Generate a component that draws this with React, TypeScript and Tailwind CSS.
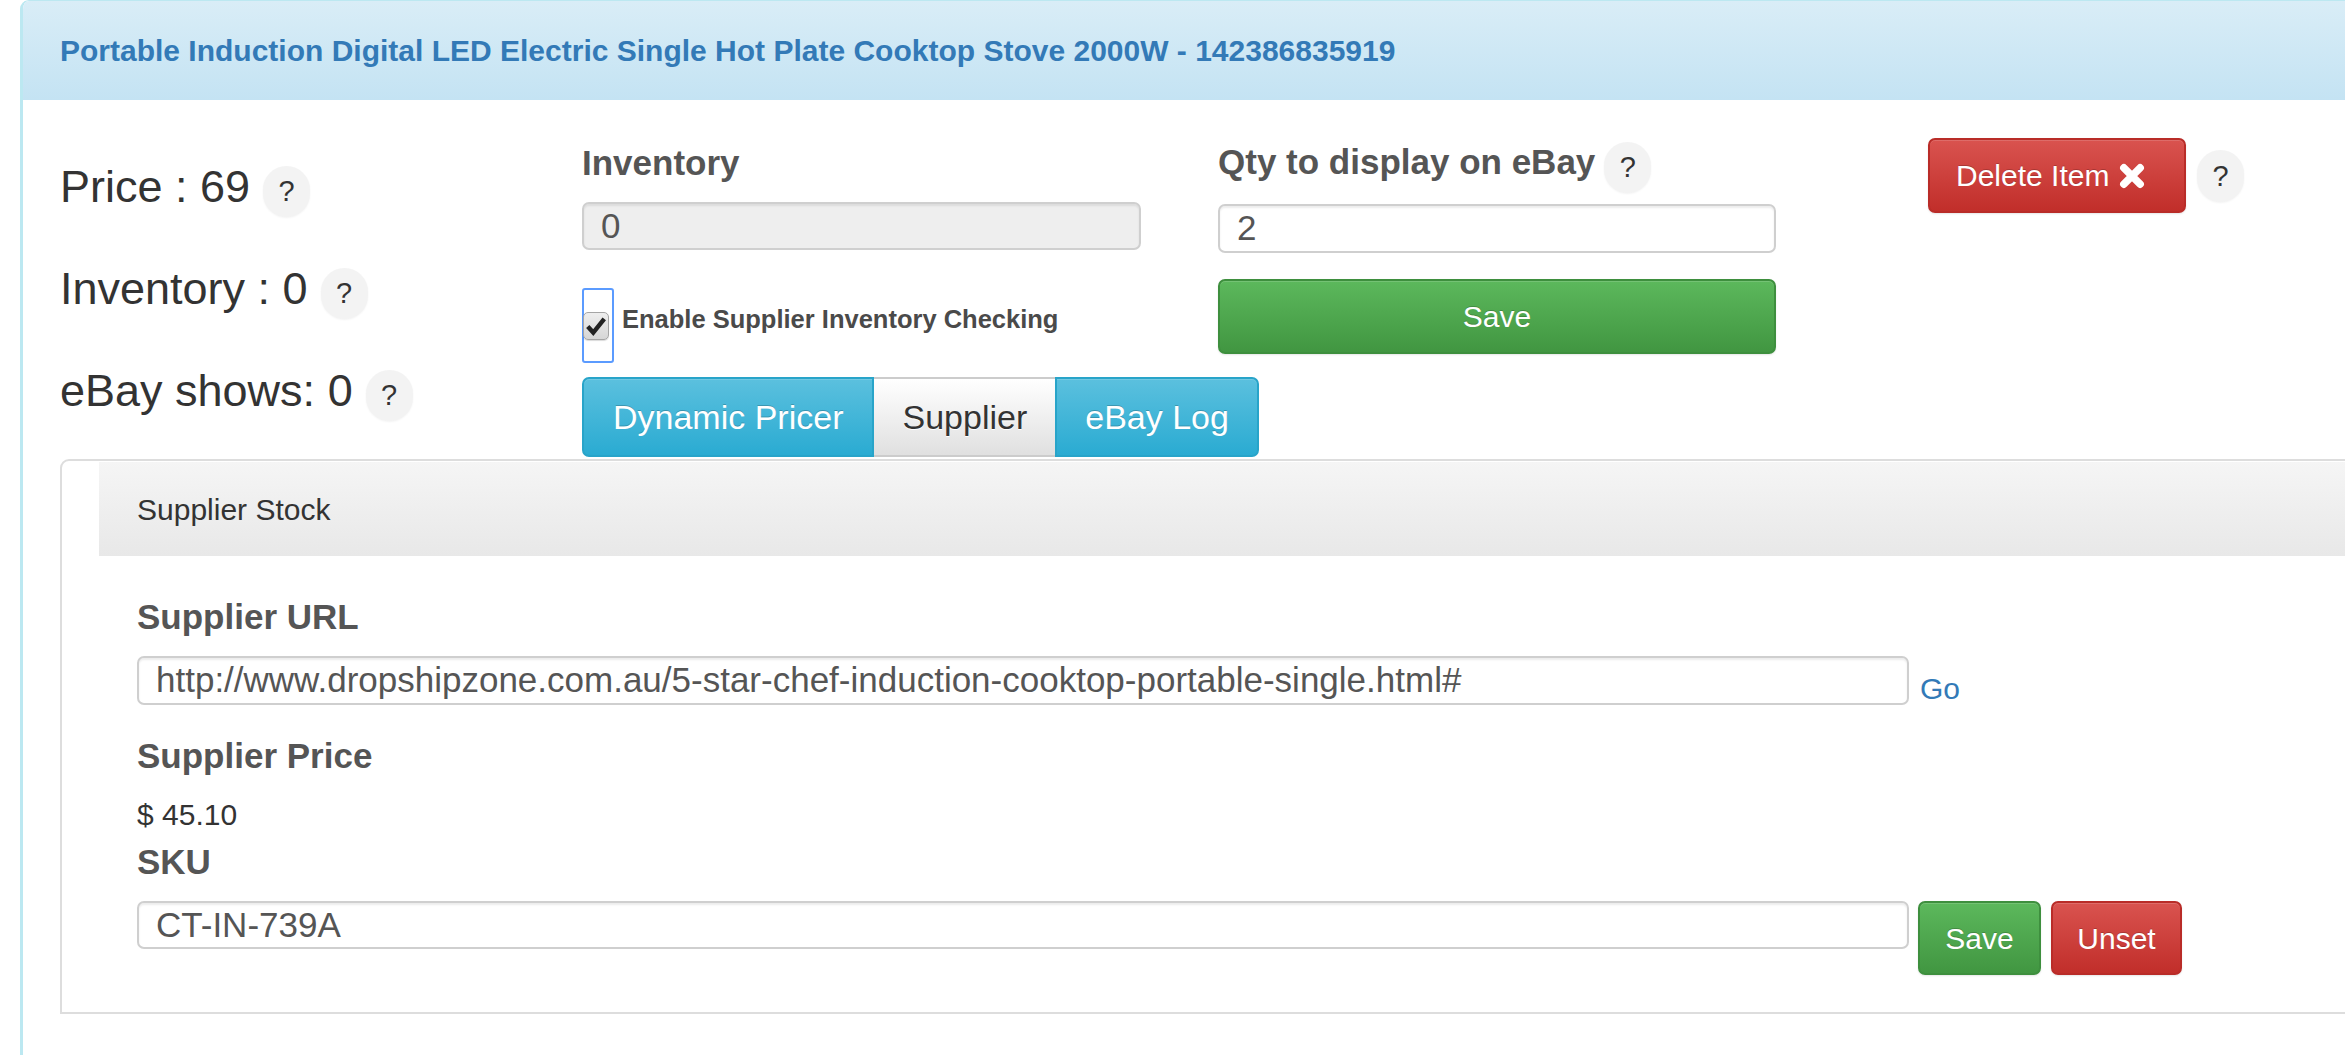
import React from "react";

function Help({ className = "" }: { className?: string }) {
  return (
    <span
      className={`inline-flex shrink-0 items-center justify-center w-[47px] h-[51px] rounded-full bg-[#f3f3f3] text-[29px] leading-none text-[#333] shadow-[0_1px_2px_rgba(0,0,0,0.05)] ${className}`}
    >
      ?
    </span>
  );
}

function Field({
  value,
  className = "",
  disabled = false,
}: {
  value: string;
  className?: string;
  disabled?: boolean;
}) {
  return (
    <input
      readOnly
      value={value}
      disabled={disabled}
      className={`block shrink-0 h-[48px] px-[17px] border-2 border-[#cfcfcf] rounded-[7px] text-[35px] text-[#555] outline-none shadow-[inset_0_2px_2px_rgba(0,0,0,0.075)] ${
        disabled ? "bg-[#eeeeee]" : "bg-white"
      } ${className}`}
    />
  );
}

function Stat({ text }: { text: string }) {
  return (
    <div className="flex items-center h-[102px]">
      <span className="text-[45px] text-[#333] whitespace-nowrap">{text}</span>
      <Help className="ml-[13px] mt-[8px]" />
    </div>
  );
}

function CheckMark() {
  return (
    <span className="-ml-[1px] w-[26px] h-[28px] rounded-[5px] border border-[#a5a5a5] bg-[linear-gradient(180deg,#eeeeee,#d6d6d6)] shadow-[0_1px_1px_rgba(0,0,0,0.15)] flex items-center justify-center">
      <svg width="22" height="22" viewBox="0 0 20 20">
        <path d="M2.5 10.5 L7.5 16 L17.5 3.5" fill="none" stroke="#222" strokeWidth="4" strokeLinejoin="miter" />
      </svg>
    </span>
  );
}

const shadowText = "[text-shadow:0_-1px_0_rgba(0,0,0,0.2)]";

export default function App() {
  return (
    <div className="w-[2345px] h-[1055px] overflow-hidden bg-white font-['Liberation_Sans',Arial,Helvetica,sans-serif] text-[#333]">
      <div className="ml-[20px] w-[2400px] min-h-[1120px] border-l-[3px] border-t border-[#bce8f1] rounded-tl-[9px] overflow-hidden">
        {/* Heading */}
        <div className="h-[99px] flex items-center pl-[37px] bg-[linear-gradient(180deg,#d9edf7,#c4e3f3)]">
          <span className="text-[30px] font-bold text-[#337ab7]">
            Portable Induction Digital LED Electric Single Hot Plate Cooktop Stove 2000W - 142386835919
          </span>
        </div>

        {/* Body */}
        <div className="pl-[37px]">
          <div className="flex">
            {/* Stats */}
            <div className="w-[522px] shrink-0 pt-[36px]">
              <Stat text="Price : 69" />
              <Stat text="Inventory : 0" />
              <Stat text="eBay shows: 0" />
            </div>

            {/* Inventory column */}
            <div className="w-[636px] shrink-0 pt-[43px]">
              <div className="text-[35px] font-bold leading-[40px] text-[#555] whitespace-nowrap">Inventory</div>
              <Field value="0" disabled className="mt-[19px] w-[559px]" />
              <div className="mt-[38px] flex items-start">
                <div className="w-[32px] h-[75px] shrink-0 border-2 border-[#5b9bff] rounded-[3px] flex items-center">
                  <CheckMark />
                </div>
                <span className="ml-[8px] mt-[12px] text-[25.5px] font-bold text-[#4a4a4a] whitespace-nowrap">
                  Enable Supplier Inventory Checking
                </span>
              </div>
              <div className="mt-[14px] flex h-[80px] whitespace-nowrap">
                <button
                  className={`shrink-0 h-full px-[29px] text-[34px] text-white border-2 border-[#28a4c9] rounded-l-[7px] bg-[linear-gradient(180deg,#5bc0de,#2aabd2)] shadow-[inset_0_1px_0_rgba(255,255,255,0.15)] ${shadowText}`}
                >
                  Dynamic Pricer
                </button>
                <button className="shrink-0 h-full px-[28px] text-[34px] text-[#333] border-y-2 border-[#cccccc] bg-[linear-gradient(180deg,#ffffff,#e0e0e0)] [text-shadow:0_1px_0_#fff]">
                  Supplier
                </button>
                <button
                  className={`shrink-0 h-full px-[28px] text-[34px] text-white border-2 border-[#28a4c9] rounded-r-[7px] bg-[linear-gradient(180deg,#5bc0de,#2aabd2)] shadow-[inset_0_1px_0_rgba(255,255,255,0.15)] ${shadowText}`}
                >
                  eBay Log
                </button>
              </div>
            </div>

            {/* Qty column */}
            <div className="w-[710px] shrink-0 pt-[42px]">
              <div className="flex items-start h-[51px]">
                <span className="text-[35px] font-bold leading-[40px] text-[#555] whitespace-nowrap">Qty to display on eBay</span>
                <Help className="ml-[9px]" />
              </div>
              <Field value="2" className="mt-[11px] w-[558px] h-[49px]" />
              <button
                className={`mt-[26px] w-[558px] h-[75px] text-[30px] text-white border-2 border-[#3e8f3e] rounded-[7px] bg-[linear-gradient(180deg,#5cb85c,#419641)] shadow-[inset_0_1px_0_rgba(255,255,255,0.15),0_1px_2px_rgba(0,0,0,0.1)] ${shadowText}`}
              >
                Save
              </button>
            </div>

            {/* Delete column */}
            <div className="pt-[38px] flex items-start">
              <button
                className={`shrink-0 h-[75px] w-[258px] pl-[26px] flex items-center text-[30px] text-white border-2 border-[#b92c28] rounded-[7px] bg-[linear-gradient(180deg,#d9534f,#c12e2a)] shadow-[inset_0_1px_0_rgba(255,255,255,0.15),0_1px_2px_rgba(0,0,0,0.1)] ${shadowText}`}
              >
                Delete Item
                <svg className="ml-[10px]" width="26" height="26" viewBox="0 0 24 24">
                  <path d="M4.5 4.5 L19.5 19.5 M19.5 4.5 L4.5 19.5" stroke="#fff" strokeWidth="7" strokeLinecap="round" />
                </svg>
              </button>
              <Help className="ml-[11px] mt-[12px] w-[45px] h-[52px]" />
            </div>
          </div>

          {/* Supplier stock box */}
          <div className="mt-[2px] border-2 border-[#dddddd] rounded-tl-[9px]">
            <div className="ml-[37px] mt-[1px] h-[94px] flex items-center pl-[38px] bg-[linear-gradient(180deg,#f5f5f5,#e8e8e8)]">
              <span className="text-[30px] text-[#333]">Supplier Stock</span>
            </div>
            <div className="pl-[75px] pt-[41px] pb-[37px]">
              <div className="text-[35px] font-bold leading-[40px] text-[#555]">Supplier URL</div>
              <div className="mt-[19px] flex items-end">
                <Field
                  value="http://www.dropshipzone.com.au/5-star-chef-induction-cooktop-portable-single.html#"
                  className="w-[1772px] h-[49px]"
                />
                <a className="ml-[11px] mb-[1px] text-[30px] leading-[30px] text-[#337ab7]" href="#">
                  Go
                </a>
              </div>
              <div className="mt-[31px] text-[35px] font-bold leading-[40px] text-[#555]">Supplier Price</div>
              <div className="mt-[19px] text-[30px] leading-[40px] text-[#333]">$ 45.10</div>
              <div className="mt-[7px] text-[35px] font-bold leading-[40px] text-[#555]">SKU</div>
              <div className="mt-[19px] flex items-start">
                <Field value="CT-IN-739A" className="w-[1772px]" />
                <button
                  className={`shrink-0 ml-[9px] w-[123px] h-[74px] text-[30px] text-white border-2 border-[#3e8f3e] rounded-[7px] bg-[linear-gradient(180deg,#5cb85c,#419641)] shadow-[inset_0_1px_0_rgba(255,255,255,0.15),0_1px_2px_rgba(0,0,0,0.1)] ${shadowText}`}
                >
                  Save
                </button>
                <button
                  className={`shrink-0 ml-[10px] w-[131px] h-[74px] text-[30px] text-white border-2 border-[#b92c28] rounded-[7px] bg-[linear-gradient(180deg,#d9534f,#c12e2a)] shadow-[inset_0_1px_0_rgba(255,255,255,0.15),0_1px_2px_rgba(0,0,0,0.1)] ${shadowText}`}
                >
                  Unset
                </button>
              </div>
            </div>
          </div>
        </div>
      </div>
    </div>
  );
}
